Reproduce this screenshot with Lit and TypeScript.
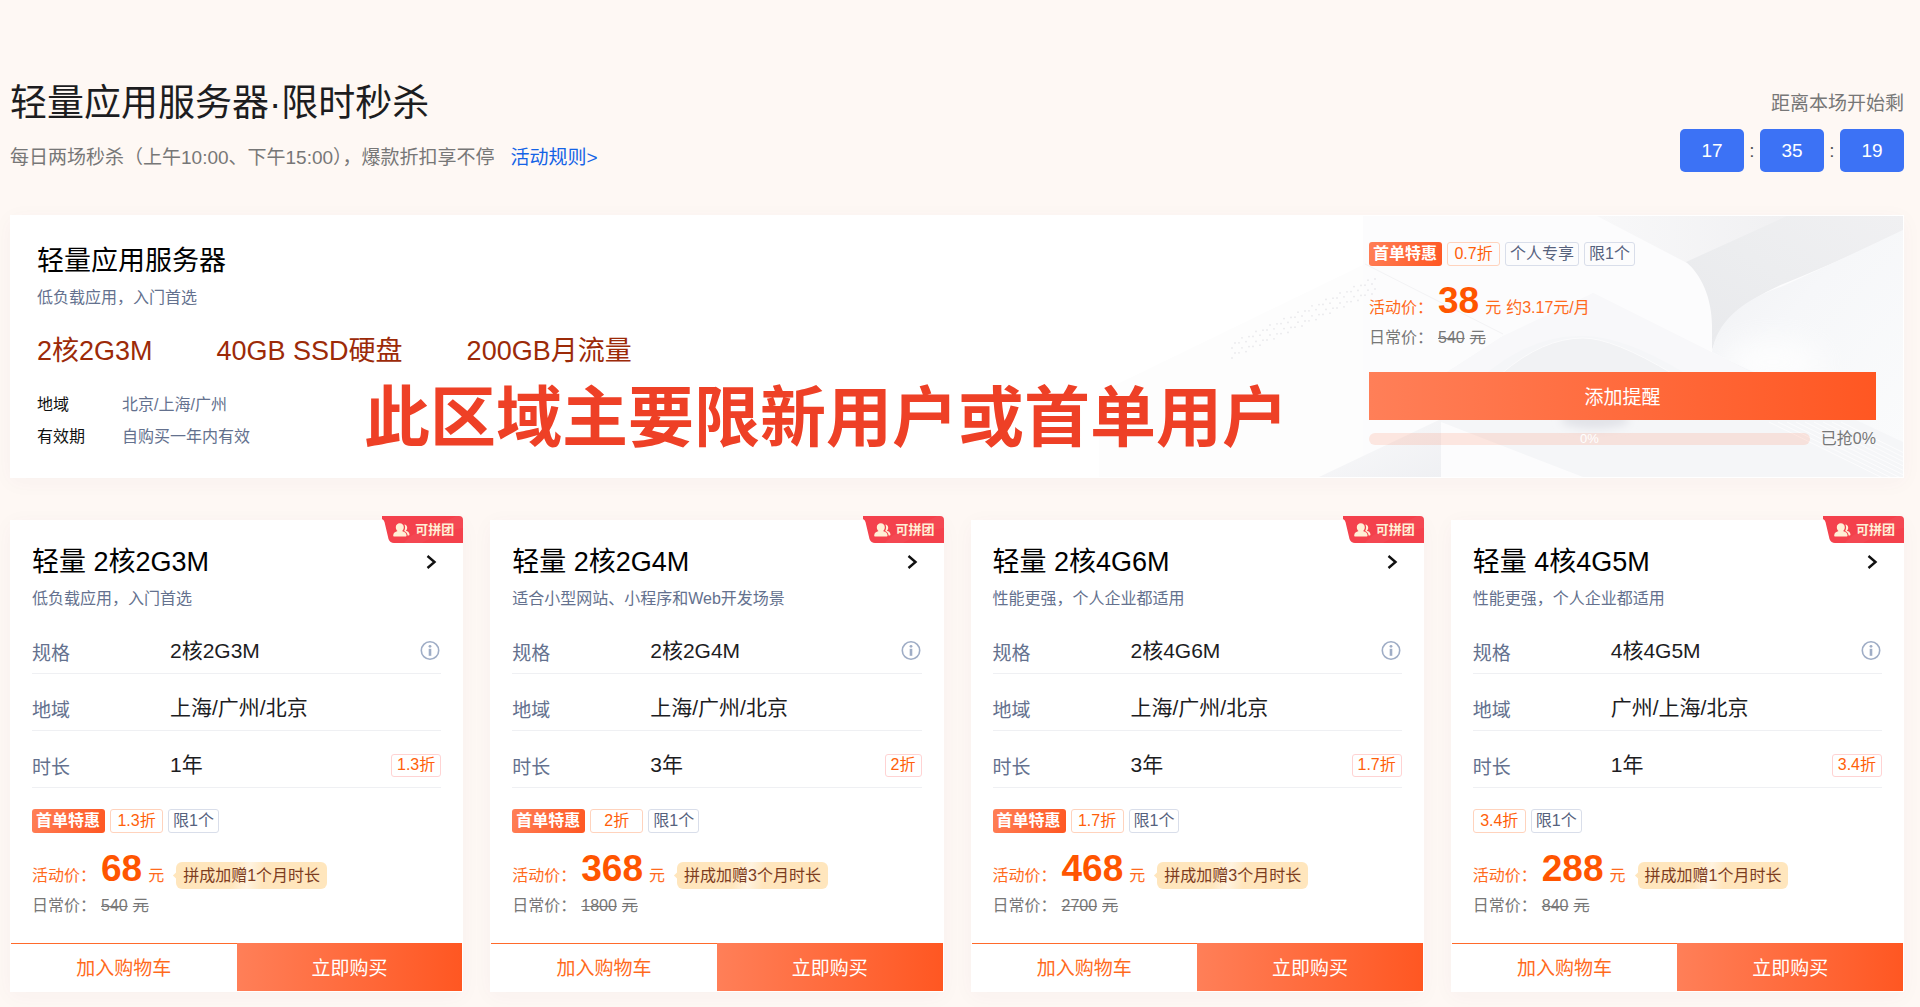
import { LitElement, html, css, svg, nothing } from "lit";
import { customElement, property } from "lit/decorators.js";

interface Plan {
  name: string;
  desc: string;
  spec: string;
  region: string;
  duration: string;
  discount: string;
  firstOrder: boolean;
  price: string;
  original: string;
  bonus: string;
}

const PLANS: Plan[] = [
  { name: "轻量 2核2G3M", desc: "低负载应用，入门首选", spec: "2核2G3M", region: "上海/广州/北京", duration: "1年", discount: "1.3折", firstOrder: true, price: "68", original: "540", bonus: "拼成加赠1个月时长" },
  { name: "轻量 2核2G4M", desc: "适合小型网站、小程序和Web开发场景", spec: "2核2G4M", region: "上海/广州/北京", duration: "3年", discount: "2折", firstOrder: true, price: "368", original: "1800", bonus: "拼成加赠3个月时长" },
  { name: "轻量 2核4G6M", desc: "性能更强，个人企业都适用", spec: "2核4G6M", region: "上海/广州/北京", duration: "3年", discount: "1.7折", firstOrder: true, price: "468", original: "2700", bonus: "拼成加赠3个月时长" },
  { name: "轻量 4核4G5M", desc: "性能更强，个人企业都适用", spec: "4核4G5M", region: "广州/上海/北京", duration: "1年", discount: "3.4折", firstOrder: false, price: "288", original: "840", bonus: "拼成加赠1个月时长" },
];

const shared = css`
  * {
    box-sizing: border-box;
  }
  h1,
  h2,
  h3,
  p,
  dl,
  dd,
  ul {
    margin: 0;
    padding: 0;
    font-weight: 400;
  }
  ul {
    list-style: none;
  }
  button {
    font-family: inherit;
    border: 0;
    border-radius: 0;
    margin: 0;
    padding: 0;
    cursor: pointer;
  }
  .solid {
    color: #fff;
    background: linear-gradient(90deg, #ff7f58, #ff5722);
  }
  .tags {
    display: flex;
    gap: 5px;
  }
  .tag {
    height: 24px;
    line-height: 22px;
    padding: 0 4px;
    font-size: 16px;
    border: 1px solid #d9deea;
    border-radius: 3px;
    color: #56627d;
    text-align: center;
    white-space: nowrap;
  }
  .tag.first {
    border: 0;
    padding-right: 5px;
    line-height: 24px;
    font-weight: 700;
    color: #fff;
    background: linear-gradient(110deg, #ff7f58, #ff5722);
  }
  .tag.off {
    min-width: 53px;
    border-color: #ffd3bd;
    color: #ff5f0a;
  }
  .price {
    display: flex;
    align-items: baseline;
    height: 40px;
    line-height: 40px;
    font-size: 16px;
    color: #ff6a1c;
    white-space: nowrap;
  }
  .label {
    width: 69px;
  }
  .num {
    font-size: 37px;
    font-weight: 700;
    color: #ff5500;
    margin-right: 6px;
  }
  .was {
    display: flex;
    line-height: 24px;
    font-size: 16px;
    color: #777;
  }
  .was s + s {
    margin-left: 5px;
  }
`;

@customElement("promo-tags")
class PromoTags extends LitElement {
  @property({ type: Boolean }) first = false;
  @property() discount = "";
  @property({ attribute: false }) extra: string[] = [];

  static styles = [shared, css`:host { display: block; }`];

  render() {
    return html`<ul class="tags">
      ${this.first ? html`<li class="tag first">首单特惠</li>` : nothing}
      <li class="tag off">${this.discount}</li>
      ${this.extra.map((t) => html`<li class="tag">${t}</li>`)}
    </ul>`;
  }
}

@customElement("plan-card")
class PlanCard extends LitElement {
  @property({ attribute: false }) plan!: Plan;

  static styles = [
    shared,
    css`
      :host {
        display: block;
        position: relative;
        background: #fff;
        border: 1px solid #fff;
        box-shadow: 0 4px 20px rgba(90, 60, 90, 0.04);
      }
      .ribbon {
        position: absolute;
        top: -5px;
        right: -1px;
        width: 81px;
        height: 27px;
        display: flex;
        align-items: center;
        gap: 5px;
        padding-left: 11px;
        font-size: 13px;
        line-height: 27px;
        font-weight: 700;
        color: #fff0d6;
      }
      .ribbon .shape {
        position: absolute;
        inset: 0;
      }
      .ribbon .people {
        position: relative;
      }
      .ribbon span {
        position: relative;
      }
      .body {
        padding: 23px 21px 25px;
      }
      .head {
        display: flex;
        justify-content: space-between;
        align-items: center;
      }
      h3 {
        font-size: 27px;
        line-height: 36px;
        color: #000;
      }
      .more {
        display: flex;
        padding-right: 4px;
      }
      .desc {
        margin: 7px 0 6px;
        font-size: 16px;
        line-height: 24px;
        color: #64718e;
      }
      .row {
        display: flex;
        align-items: center;
        height: 57px;
        padding: 17px 0 5px;
        border-bottom: 1px solid #eff0f3;
      }
      dt {
        width: 138px;
        font-size: 19px;
        line-height: 34px;
        padding-top: 5px;
        color: #64718e;
      }
      dd {
        flex: 1;
        display: flex;
        justify-content: space-between;
        align-items: center;
        font-size: 21px;
        line-height: 34px;
        color: #1d1d1f;
      }
      .info {
        display: flex;
        background: none;
      }
      .cut {
        height: 23px;
        padding: 0 5px;
        font-size: 16px;
        line-height: 20px;
        border: 1px solid #ffd3d3;
        border-radius: 3px;
        color: #ff5f0a;
      }
      promo-tags {
        margin: 21px 0 16px;
      }
      .bonus {
        position: relative;
        margin-left: 12px;
        padding: 0 7px;
        line-height: 27px;
        border-radius: 6px;
        color: #7d3c1e;
        background: linear-gradient(100deg, #ffe6bd 38%, #fff3e0 48%, #ffe6bd 58%);
      }
      .bonus::before {
        content: "";
        position: absolute;
        left: -2px;
        top: 11px;
        width: 5px;
        height: 5px;
        background: #ffe6bd;
        transform: rotate(45deg);
      }
      .was {
        margin-top: 5px;
      }
      .actions {
        display: grid;
        grid-template-columns: 1fr 1fr;
      }
      .actions button {
        height: 48px;
        padding-bottom: 2px;
        font-size: 19px;
      }
      .cart {
        background: #fff;
        color: #ff6a1c;
        border-top: 1px solid #ff6a2b;
      }
    `,
  ];

  render() {
    const p = this.plan;
    return html`
      <div class="ribbon">
        <svg class="shape" width="81" height="27" viewBox="0 0 81 27" aria-hidden="true">
          <path d="M0 0h77a4 4 0 0 1 4 4v23H12q-4 0-5.500-4L2.500 6Q2 4 0 3z" fill="#f4414c" />
          <path d="M22 27q8-10 22-14t30-13h3a4 4 0 0 1 4 4v8Q60 14 40 27z" fill="#fff" opacity=".04" />
        </svg>
        <svg class="people" width="17" height="14" viewBox="0 0 17 14" fill="#fff0d6" aria-hidden="true">
          <path d="M6.800 0.300c2.400 0 4 1.700 4 3.900 0 1.600-.8 3-1.800 3.900 2.500.7 4.500 2 4.500 4.300 0 .6-.4 1-1 1H1.200c-.6 0-1-.4-1-1 0-2.300 2-3.600 4.400-4.300C3.600 7.200 2.800 5.800 2.800 4.200c0-2.200 1.600-3.900 4-3.900z" />
          <path d="M11.300 1.600c1.700.2 2.900 1.500 2.900 3.200 0 1.200-.5 2.200-1.300 2.900 1.900.6 3.600 1.700 3.600 3.800 0 .6-.3.900-.8.900h-1.100c-.1-2.100-1.500-3.600-3.500-4.500 1.200-1.700 1.400-4.300.2-6.300z" />
        </svg>
        <span>可拼团</span>
      </div>
      <div class="body">
        <div class="head">
          <h3>${p.name}</h3>
          <a class="more" href="#" aria-label="查看详情">
            <svg width="11" height="14" viewBox="0 0 11 14" fill="none" stroke="#111" stroke-width="2.400" aria-hidden="true">
              <path d="M1.500 1l7 6-7 6" />
            </svg>
          </a>
        </div>
        <p class="desc">${p.desc}</p>
        <dl>
          <div class="row">
            <dt>规格</dt>
            <dd>
              ${p.spec}
              <button class="info" aria-label="规格说明">
                <svg width="21" height="20" viewBox="0 0 21 20" fill="none" aria-hidden="true">
                  <circle cx="10" cy="9.500" r="8.700" stroke="#9fadc6" stroke-width="1.600" />
                  <circle cx="10" cy="5.300" r="1.400" fill="#9fadc6" />
                  <path d="M10 7.800v7" stroke="#9fadc6" stroke-width="2.600" />
                </svg>
              </button>
            </dd>
          </div>
          <div class="row"><dt>地域</dt><dd>${p.region}</dd></div>
          <div class="row"><dt>时长</dt><dd>${p.duration}<span class="cut">${p.discount}</span></dd></div>
        </dl>
        <promo-tags ?first=${p.firstOrder} .discount=${p.discount} .extra=${["限1个"]}></promo-tags>
        <div class="price">
          <span class="label">活动价：</span><span class="num">${p.price}</span><span>元</span>
          <span class="bonus">${p.bonus}</span>
        </div>
        <div class="was"><span class="label">日常价：</span><s>${p.original}</s><s>元</s></div>
      </div>
      <div class="actions">
        <button class="cart">加入购物车</button>
        <button class="solid">立即购买</button>
      </div>
    `;
  }
}

const dots = Array.from({ length: 21 }, (_, i) =>
  [0, 1, 2, 3].map((j) => svg`<circle cx=${152 + i * 7 - (j % 2) * 3} cy=${127 - i * 3.2 + j * 5 - (i % 2) * 2} r="0.900" />`)
);
const stripes = Array.from({ length: 9 }, (_, i) => svg`<path d="M${686 + i * 9} 206L${812 + i * 9} ${268}" />`);

@customElement("app-root")
class AppRoot extends LitElement {
  static styles = [
    shared,
    css`
      :host {
        display: block;
        box-sizing: border-box;
        min-height: 100vh;
        padding: 80px 16px 15px 10px;
        background: #fef8f4;
        font-family: "Liberation Sans", "Noto Sans CJK SC", sans-serif;
        color: #1d1d1f;
      }
      header {
        display: flex;
        justify-content: space-between;
        align-items: flex-end;
        margin-bottom: 42px;
      }
      h1 {
        font-size: 37px;
        line-height: 48px;
      }
      .sub {
        display: flex;
        gap: 16px;
        margin-top: 15px;
        font-size: 19px;
        line-height: 30px;
        color: #777;
      }
      .sub a {
        color: #1463e6;
        text-decoration: none;
      }
      .timer {
        text-align: right;
        font-size: 19px;
        line-height: 28px;
        color: #777;
      }
      .clock {
        display: flex;
        margin: 11px 0 1px;
        line-height: 43px;
        text-align: center;
      }
      .clock b {
        width: 64px;
        border-radius: 5px;
        background: #3c72f5;
        color: #fff;
        font-weight: 400;
      }
      .clock i {
        width: 16px;
        font-style: normal;
        color: #555;
      }
      .banner {
        position: relative;
        display: flex;
        justify-content: space-between;
        margin-bottom: 42px;
        padding: 27px 27px 24px 26px;
        border: 1px solid #fff;
        background: #fff;
        box-shadow: 0 4px 20px rgba(90, 60, 90, 0.04);
      }
      .art {
        position: absolute;
        top: 0;
        right: 0;
        height: 100%;
      }
      .intro,
      .offer {
        position: relative;
      }
      .offer {
        width: 507px;
        margin-top: -1px;
      }
      h2 {
        font-size: 27px;
        line-height: 36px;
        color: #000;
      }
      .desc {
        margin-top: 7px;
        font-size: 16px;
        line-height: 24px;
        color: #64718e;
      }
      .specs {
        display: flex;
        gap: 64px;
        margin: 23px 0 20px;
        font-size: 27px;
        line-height: 36px;
        color: #9c2a08;
      }
      .facts {
        display: grid;
        grid-template-columns: 85px auto;
        font-size: 16px;
        line-height: 32px;
        color: #111;
      }
      .facts dd {
        color: #64718e;
      }
      .offer .price {
        margin-top: 15px;
        margin-bottom: 5px;
      }
      .rate {
        margin-left: 5px;
      }
      .remind {
        width: 100%;
        height: 48px;
        margin: 22px 0 7px;
        padding-bottom: 2px;
        font-size: 19px;
      }
      .progress {
        display: flex;
        align-items: center;
        gap: 11px;
        font-size: 16px;
        line-height: 24px;
        color: #777;
      }
      .bar {
        flex: 1;
        height: 12px;
        border-radius: 6px;
        background: rgba(255, 87, 34, 0.13);
        font-size: 13px;
        line-height: 12px;
        text-align: center;
        color: #fff;
      }
      .note {
        position: absolute;
        left: 353px;
        top: 154px;
        font-size: 66px;
        line-height: 96px;
        font-weight: 700;
        color: #ee4026;
        white-space: nowrap;
      }
      .plans {
        display: grid;
        grid-template-columns: repeat(4, 1fr);
        gap: 27px;
      }
    `,
  ];

  private art() {
    return html`<svg class="art" width="820" height="261" viewBox="0 0 820 261" preserveAspectRatio="xMaxYMid slice" aria-hidden="true">
      <defs>
        <linearGradient id="band" x1="0" y1="1" x2="1" y2="0">
          <stop offset="0" stop-color="#e8e9ec" />
          <stop offset="0.500" stop-color="#ecedef" />
          <stop offset="1" stop-color="#f0f0f2" />
        </linearGradient>
        <linearGradient id="fold" x1="0" y1="0" x2="1" y2="1">
          <stop offset="0" stop-color="#eff0f3" />
          <stop offset="0.400" stop-color="#f6f7f9" />
          <stop offset="1" stop-color="#fafbfc" />
        </linearGradient>
        <linearGradient id="top" x1="0" y1="0" x2="1" y2="0">
          <stop offset="0" stop-color="#f8f8f9" />
          <stop offset="1" stop-color="#f0f0f2" />
        </linearGradient>
        <linearGradient id="wedge" x1="0" y1="0" x2="1" y2="1">
          <stop offset="0" stop-color="#fafafb" />
          <stop offset="1" stop-color="#eff0f3" />
        </linearGradient>
        <filter id="soft" x="-50%" y="-50%" width="200%" height="200%"><feGaussianBlur stdDeviation="14" /></filter>
        <filter id="mist" x="-50%" y="-50%" width="200%" height="200%"><feGaussianBlur stdDeviation="4" /></filter>
      </defs>
      <path d="M16 261v-84L282 48l140 70v143z" fill="#fdfdfd" />
      <path d="M280 0h540v261H280z" fill="#fcfcfd" />
      <g fill="#e9e9ec">${dots}</g>
      <path d="M282 48L420 118" stroke="#f3f3f5" />
      <path d="M236 261L358 203v58z" fill="url(#wedge)" />
      <path d="M514 0h200L604 47z" fill="url(#top)" />
      <path d="M603 46L704 0h116v16Q740 52 700 68Q640 94 629 134V110C629 82 618 58 603 46z" fill="url(#band)" />
      <path d="M820 14Q740 52 700 70Q636 92 629 136L820 230z" fill="url(#fold)" />
      <ellipse cx="690" cy="146" rx="50" ry="22" fill="#fff" opacity=".8" filter="url(#soft)" />
      <path d="M358 206V160L420 120Q480 98 510 77L632 138L820 226V261H500z" fill="#f5f6f8" />
      <path d="M510 77L632 138L668 156H600Q540 120 500 120Q450 118 400 160H358L420 120z" fill="#f8f8fa" />
      <path d="M418 158Q460 122 500 122Q530 122 590 158z" fill="#f1f2f4" stroke="#fbfbfc" />
      <ellipse cx="512" cy="204" rx="34" ry="9" fill="#e2e3e8" filter="url(#mist)" />
      <g stroke="#fcfcfd" fill="none">${stripes}</g>
    </svg>`;
  }

  render() {
    return html`
      <header>
        <div>
          <h1>轻量应用服务器·限时秒杀</h1>
          <p class="sub">
            <span>每日两场秒杀（上午10:00、下午15:00），爆款折扣享不停</span>
            <a href="#">活动规则&gt;</a>
          </p>
        </div>
        <div class="timer">
          <p>距离本场开始剩</p>
          <div class="clock"><b>17</b><i>:</i><b>35</b><i>:</i><b>19</b></div>
        </div>
      </header>
      <section class="banner">
        ${this.art()}
        <div class="intro">
          <h2>轻量应用服务器</h2>
          <p class="desc">低负载应用，入门首选</p>
          <ul class="specs">
            <li>2核2G3M</li>
            <li>40GB SSD硬盘</li>
            <li>200GB月流量</li>
          </ul>
          <dl class="facts">
            <dt>地域</dt><dd>北京/上海/广州</dd>
            <dt>有效期</dt><dd>自购买一年内有效</dd>
          </dl>
        </div>
        <div class="offer">
          <promo-tags first .discount=${"0.7折"} .extra=${["个人专享", "限1个"]}></promo-tags>
          <div class="price">
            <span class="label">活动价：</span><span class="num">38</span><span>元</span>
            <span class="rate">约3.17元/月</span>
          </div>
          <div class="was"><span class="label">日常价：</span><s>540</s><s>元</s></div>
          <button class="remind solid">添加提醒</button>
          <div class="progress"><div class="bar">0%</div><span>已抢0%</span></div>
        </div>
        <p class="note">此区域主要限新用户或首单用户</p>
      </section>
      <section class="plans">
        ${PLANS.map((plan) => html`<plan-card .plan=${plan}></plan-card>`)}
      </section>
    `;
  }
}
